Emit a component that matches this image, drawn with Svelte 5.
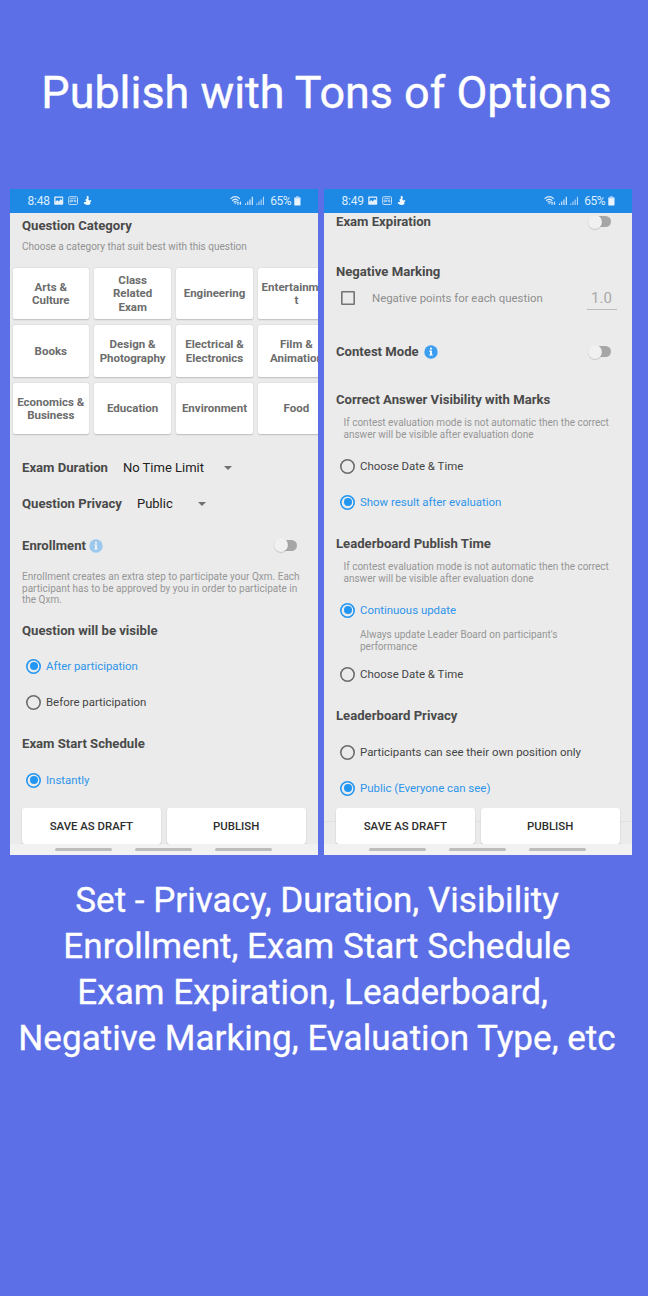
<script>
  const categories = [
    'Arts &\nCulture', 'Class\nRelated\nExam', 'Engineering', 'Entertainmen\nt',
    'Books', 'Design &\nPhotography', 'Electrical &\nElectronics', 'Film &\nAnimation',
    'Economics &\nBusiness', 'Education', 'Environment', 'Food'
  ];
  const summary = [
    'Set - Privacy, Duration, Visibility',
    'Enrollment, Exam Start Schedule',
    'Exam Expiration, Leaderboard, ',
    'Negative Marking, Evaluation Type, etc'
  ];
</script>

{#snippet statusBar(time)}
  <header class="status">
    <span class="time">{time}</span>
    <svg class="notif" width="38" height="12" viewBox="0 0 38 12">
      <path fill="#e4f1fc" fill-rule="evenodd" d="M1 1.500h7.400q.8 0 .8.800v6.600q0 .8-.8.800H1q-.8 0-.8-.8V2.300q0-.8.8-.8zM1.500 2.800v3.900l1.800-1.600 1.500 1.300 2-2.300 1.400 1.500V2.800z" />
      <g fill="none" stroke="#d2e7fa" stroke-width=".9">
        <rect x="14.700" y="1.700" width="8.800" height="7.800" rx="1" />
        <path d="M16.300 3.400h5.600M16.200 5h1.500v2h-1.500zM18.600 7V5h1.200M20.600 5h1.200v2h-1.200z" stroke-width=".7" />
      </g>
      <path fill="#f2f9ff" d="M33.400.800q1.500.2 1.300 1.700l-.3 2.300 1.200.7 1.400-.6.300 1.200-1.200 1.100.6 1.100-1.600 1.600-3.100-.1-2.300-1.500.6-1.400 1.600.1.300-.8-.9-1 .6-1.200 1 .1-.3-2.300z" />
    </svg>
    <svg class="signal" width="36" height="12" viewBox="0 0 36 12">
      <g fill="none" stroke="#d8eafb" stroke-width="1.200">
        <path d="M.5 3.900q4.700-4.400 9.400 0M2.100 5.700q3.100-2.900 6.200 0M3.600 7.300q1.600-1.400 3.200 0" />
      </g>
      <path fill="#d8eafb" d="M4.100 8.200h2.200L5.200 9.600zM8 6.400l1.300 1.500h-.8v2h-1v-2h-.8zM10.400 10.100L9.100 8.600h.8v-2h1v2h.8z" />
      <path fill="#d8eafb" d="M15 8.400h1.100v1.600H15zM17.200 6.600h1.100V10h-1.100zM19.400 4.500h1.100V10h-1.100zM21.700 1.800h1.200V10h-1.200z" />
      <path fill="#b5d7f7" d="M26.200 8.400h1.100v1.600h-1.100zM28.400 6.600h1.100V10h-1.100zM30.600 4.500h1.100V10h-1.100zM32.900 1.800H34V10h-1.100z" />
    </svg>
    <span class="percent">65%</span>
    <svg width="7" height="10" viewBox="0 0 7 10">
      <path fill="#e9f4fe" d="M2.200.5h2.400v1h1.500q.4 0 .4.500v6.900q0 .6-.6.600H.900q-.6 0-.6-.6V2q0-.5.5-.5h1.400z" />
      <path fill="#a8d0f6" d="M2.200.5h2.400v1h1.500q.4 0 .4.500v.6H.300V2q0-.5.5-.5h1.400z" />
    </svg>
  </header>
{/snippet}

{#snippet info(faded)}
  <svg class="info" class:faded width="14" height="14" viewBox="0 0 14 14">
    <circle cx="7" cy="7" r="6.700" fill="#3d9ef0" />
    <path fill="#fff" d="M6 2.800h1.900v1.700H6zM5.300 5.500h2.600v3.900h.8v1.200H5.300V9.400h.8V6.700h-.8z" />
  </svg>
{/snippet}

{#snippet toggle()}
  <span class="toggle"><i></i></span>
{/snippet}

{#snippet radio(label, checked)}
  <div class="row radio" class:checked>
    <span class="ring"></span><span>{label}</span>
  </div>
{/snippet}

{#snippet actions()}
  <footer>
    <div class="buttons"><div class="button">SAVE AS DRAFT</div><div class="button">PUBLISH</div></div>
    <div class="nav"><i></i><i></i><i></i></div>
  </footer>
{/snippet}

<main>
  <h1>Publish with Tons of Options</h1>

  <div class="phones">
    <section class="phone">
      {@render statusBar('8:48')}
      <div class="content">
        <h2 class="row category-title">Question Category</h2>
        <p class="category-hint">Choose a category that suit best with this question</p>
        <div class="grid">
          {#each categories as name}
            <div class="card">{name}</div>
          {/each}
        </div>
        <div class="row duration">
          <h2>Exam Duration</h2><span class="value">No Time Limit</span><i class="caret"></i>
        </div>
        <div class="row privacy">
          <h2>Question Privacy</h2><span class="value">Public</span><i class="caret"></i>
        </div>
        <div class="row enrollment"><h2>Enrollment</h2>{@render info(true)}{@render toggle()}</div>
        <p class="note enroll-note">Enrollment creates an extra step to participate your Qxm. Each<br />participant has to be approved by you in order to participate in<br />the Qxm.</p>
        <h2 class="row visible-title">Question will be visible</h2>
        {@render radio('After participation', true)}
        {@render radio('Before participation', false)}
        <h2 class="row gap">Exam Start Schedule</h2>
        {@render radio('Instantly', true)}
      </div>
      {@render actions()}
    </section>

    <section class="phone">
      {@render statusBar('8:49')}
      <div class="content">
        <div class="row expiration"><h2>Exam Expiration</h2>{@render toggle()}</div>
        <h2 class="row negative-title">Negative Marking</h2>
        <div class="row negative">
          <span class="box"></span><span class="negative-label">Negative points for each question</span>
          <span class="points">1.0</span>
        </div>
        <div class="row contest"><h2>Contest Mode</h2>{@render info(false)}{@render toggle()}</div>
        <h2 class="row correct-title">Correct Answer Visibility with Marks</h2>
        <p class="note indented">If contest evaluation mode is not automatic then the correct<br />answer will be visible after evaluation done</p>
        {@render radio('Choose Date & Time', false)}
        {@render radio('Show result after evaluation', true)}
        <h2 class="row gap">Leaderboard Publish Time</h2>
        <p class="note indented">If contest evaluation mode is not automatic then the correct<br />answer will be visible after evaluation done</p>
        {@render radio('Continuous update', true)}
        <p class="note update-note">Always update Leader Board on participant's<br />performance</p>
        {@render radio('Choose Date & Time', false)}
        <h2 class="row gap">Leaderboard Privacy</h2>
        {@render radio('Participants can see their own position only', false)}
        {@render radio('Public (Everyone can see)', true)}
        <div class="divider"></div>
      </div>
      {@render actions()}
    </section>
  </div>

  <div class="summary">
    {#each summary as line}<p>{line}</p>{/each}
  </div>
</main>

<style>
  :global(body) { background: #5c6fe6; }
  main {
    box-sizing: border-box;
    height: 1296px;
    padding-top: 65px;
    overflow: hidden;
    background: #5c6fe6;
    font-family: Roboto, sans-serif;
    color: #454545;
  }
  h1, h2, p { margin: 0; }
  i { display: block; }
  h1 {
    height: 56px;
    padding-left: 5px;
    font-size: 44.900px;
    font-weight: 400;
    line-height: 56px;
    text-align: center;
    color: #fff;
    white-space: nowrap;
    -webkit-text-stroke: .4px #fff;
  }
  .phones { display: flex; gap: 6.500px; margin-top: 68px; padding-left: 10px; }
  .phone {
    display: flex;
    flex-direction: column;
    width: 307.500px;
    height: 666px;
    overflow: hidden;
    background: #ebebeb;
  }
  .status {
    display: flex;
    flex: none;
    align-items: center;
    box-sizing: border-box;
    height: 24px;
    padding: 0 16.700px 0 17.500px;
    background: #1e88e5;
    color: #dceefd;
    font-size: 12px;
  }
  .time { width: 26.500px; font-size: 12px; letter-spacing: -.2px; }
  .signal { margin-left: auto; }
  .percent { width: 22px; margin: 0 1.500px 0 4px; font-size: 12px; letter-spacing: -.5px; }
  .content { flex: 1; min-height: 0; overflow: hidden; }
  h2 { font-size: 13.130px; font-weight: 700; line-height: 18px; white-space: nowrap; color: #4a4a4a; }
  .row { display: flex; align-items: center; box-sizing: border-box; height: 36px; padding: 0 12px; }
  .gap { margin-top: 6px; }
  .row.category-title { height: 25px; }
  .category-hint { height: 18px; padding-left: 12px; font-size: 10px; line-height: 18px; color: #929292; }
  .grid {
    display: grid;
    grid-template-columns: repeat(4, 76.500px);
    grid-auto-rows: 51.500px;
    gap: 6px 5.400px;
    margin: 11.500px 0 0 2.500px;
  }
  .card {
    display: flex;
    align-items: center;
    justify-content: center;
    box-sizing: border-box;
    padding-top: 1.500px;
    border-radius: 2px;
    background: #fff;
    box-shadow: 0 .5px 1.500px rgba(0, 0, 0, .2);
    font-size: 11.500px;
    font-weight: 700;
    line-height: 13.400px;
    text-align: center;
    white-space: pre;
    color: #6c6c6c;
  }
  .value { font-size: 13px; color: #222; }
  .caret { border: 4px solid transparent; border-top-color: #707070; border-bottom: 0; }
  .duration { margin-top: 15.500px; }
  .duration h2, .privacy h2 { margin-right: 15px; }
  .duration .caret { margin-left: 20px; }
  .privacy .caret { margin-left: 25px; }
  .enrollment { margin-top: 6px; }
  .info { margin-left: 3.500px; }
  .contest .info { margin-left: 5.500px; }
  .faded { opacity: .45; }
  .toggle {
    display: block;
    width: 19px;
    height: 11px;
    margin: -1px 9px 0 auto;
    border-radius: 6px;
    background: #a6a6a6;
  }
  .toggle i {
    width: 14px;
    height: 14px;
    margin: -1.500px 0 0 -4px;
    border-radius: 50%;
    background: #f0f0f0;
    box-shadow: 0 .8px 1px rgba(0, 0, 0, .2);
  }
  .note { font-size: 10px; line-height: 11.700px; white-space: nowrap; color: #969696; }
  .enroll-note { margin: 7.300px 0 0 12px; letter-spacing: .015px; }
  .visible-title { margin-top: 7px; }
  .visible-title + .radio { margin-top: -.5px; }
  .radio { padding-left: 16.300px; font-size: 11.430px; white-space: nowrap; }
  .ring {
    position: relative;
    box-sizing: border-box;
    flex: none;
    width: 15px;
    height: 15px;
    margin-right: 4.700px;
    border-radius: 50%;
    box-shadow: inset 0 0 0 1.600px #6b6b6b;
  }
  .checked { color: #2e95ea; }
  .checked .ring { box-shadow: inset 0 0 0 1.600px #2196f3; }
  .checked .ring::after {
    content: '';
    position: absolute;
    inset: 3.500px;
    border-radius: 50%;
    background: #2196f3;
  }
  .expiration { margin-top: -9px; }
  .negative-title { margin-top: 14px; }
  .negative { margin-top: -10px; padding: 0 15px 0 17px; font-size: 11.430px; color: #8e8e8e; }
  .box { box-sizing: border-box; width: 14px; height: 14px; margin-right: 17px; box-shadow: inset 0 0 0 1.600px #757575; border-radius: 1px; }
  .points { width: 30px; margin-left: auto; border-bottom: 1px solid #bcbcbc; font-size: 15px; line-height: 22px; padding-top: 1px; text-align: center; color: #a9a9a9; }
  .contest { margin-top: 18px; }
  .correct-title { margin-top: 12px; }
  .indented { margin: -1.200px 0 8px 19.500px; }
  .update-note { margin: 1px 0 3.500px 36px; }
  .divider { height: 1px; margin-top: 15px; background: #e1e1e1; }
  footer { flex: none; margin-top: -22px; }
  .buttons { display: flex; gap: 6px; padding: 0 12px; }
  .button {
    flex: 1;
    height: 35.500px;
    border-radius: 3px;
    background: #fff;
    box-shadow: 0 1px 1.500px rgba(0, 0, 0, .22);
    font-size: 11.400px;
    font-weight: 500;
    line-height: 37px;
    text-align: center;
    color: #2d2d2d;
  }
  .nav {
    position: relative;
    display: flex;
    gap: 23px;
    box-sizing: border-box;
    height: 11.500px;
    padding: 4px 0 0 45px;
    background: #f1f1f1;
  }
  .nav i { width: 57px; height: 3px; border-radius: 1.500px; background: #bdbdbd; }
  .summary {
    margin-top: 22px;
    padding-right: 14px;
    color: #fff;
    font-size: 35.080px;
    line-height: 46px;
    text-align: center;
    -webkit-text-stroke: .3px #fff;
  }
  .summary p { white-space: pre; }
</style>
